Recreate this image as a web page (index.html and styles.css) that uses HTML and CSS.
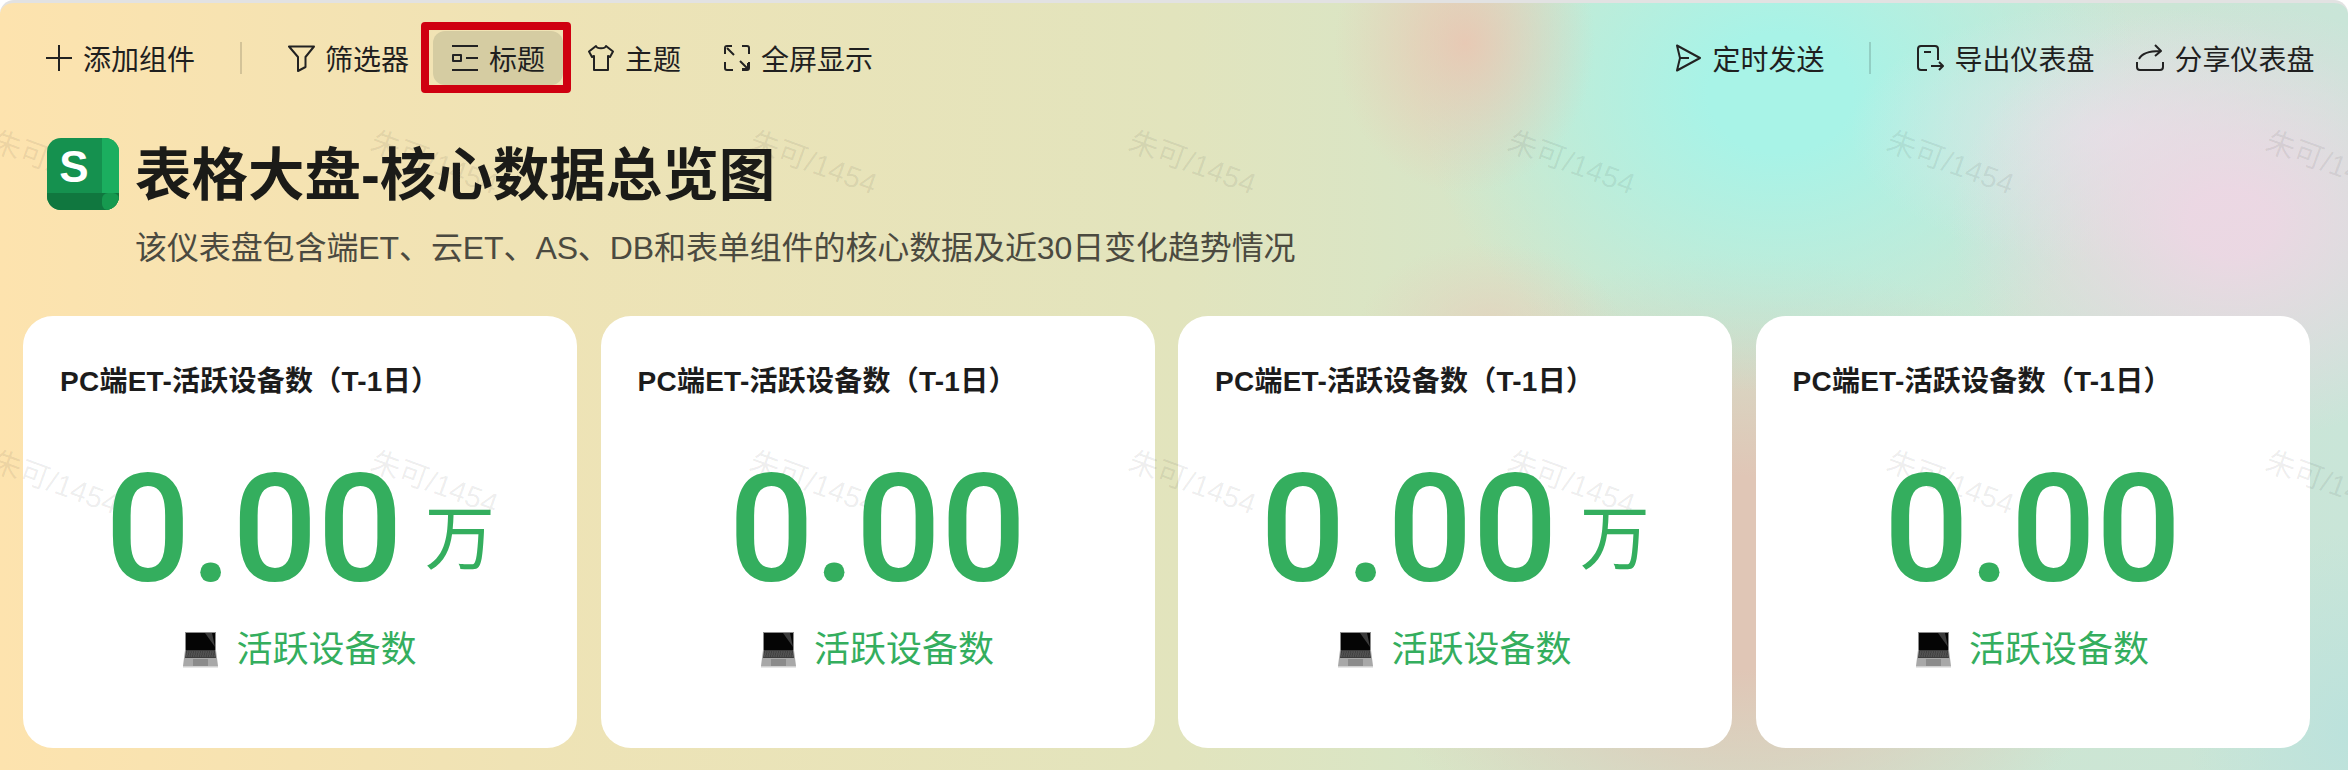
FILE: index.html
```html
<!DOCTYPE html>
<html lang="zh-CN">
<head>
  <meta charset="UTF-8">
  <title>表格大盘-核心数据总览图</title>
  <link rel="stylesheet" href="styles.css">
</head>
<body>
  <div class="dashboard">
    <div class="watermarks">
      <span>朱可/1454</span><span>朱可/1454</span><span>朱可/1454</span><span>朱可/1454</span><span>朱可/1454</span><span>朱可/1454</span><span>朱可/1454</span>
      <span>朱可/1454</span><span>朱可/1454</span><span>朱可/1454</span><span>朱可/1454</span><span>朱可/1454</span><span>朱可/1454</span><span>朱可/1454</span>
      <span>朱可/1454</span><span>朱可/1454</span><span>朱可/1454</span><span>朱可/1454</span><span>朱可/1454</span><span>朱可/1454</span><span>朱可/1454</span>
    </div>

    <div class="toolbar">
      <div class="tool-group">
        <div class="tool">
          <svg class="icon" viewBox="0 0 28 28"><path d="M14 1v26M1 14h26"/></svg>
          添加组件
        </div>
        <div class="divider"></div>
        <div class="tool">
          <svg class="icon" viewBox="0 0 28 28"><path d="M2 2.500h25l-8.500 10.500v10l-7.500 4V13z"/></svg>
          筛选器
        </div>
        <div class="tool tool-active">
          <svg class="icon" viewBox="0 0 28 28"><path d="M1 2h26M1 26h26M15 14h12M2 11h8v6H2z"/></svg>
          标题
        </div>
        <div class="tool">
          <svg class="icon" viewBox="0 0 28 28"><path d="M9 2c1 3 9 3 10 0l7 5.500-3 5.500-2-1v14H7V12l-2 1-3-5.500z"/></svg>
          主题
        </div>
        <div class="tool">
          <svg class="icon" viewBox="0 0 28 28"><path d="M2 10V4a2 2 0 0 1 2-2h5M4 4l7 7M19 2h5a2 2 0 0 1 2 2v6M2 18v6a2 2 0 0 0 2 2h6M26 18v6a2 2 0 0 1-2 2h-5M17 17l8 8M25 19v6h-6"/></svg>
          全屏显示
        </div>
      </div>
      <div class="tool-group">
        <div class="tool">
          <svg class="icon" viewBox="0 0 28 28"><path d="M3 1.500 26 14 3 26.500l3-12.500zM6 14h9"/></svg>
          定时发送
        </div>
        <div class="divider"></div>
        <div class="tool">
          <svg class="icon" viewBox="0 0 28 28"><path d="M22 16V5a3 3 0 0 0-3-3H5a3 3 0 0 0-3 3v18a3 3 0 0 0 3 3h6M8 8h7M15 22h12M23 18l4 4-4 4"/></svg>
          导出仪表盘
        </div>
        <div class="tool">
          <svg class="icon" viewBox="0 0 28 28"><path d="M1 18v5a3 3 0 0 0 3 3h20a3 3 0 0 0 3-3v-5M3 15c3-6 10-8 21-8M19 1l6 6-6 5"/></svg>
          分享仪表盘
        </div>
      </div>
    </div>

    <div class="heading">
      <svg class="logo" viewBox="0 0 72 72">
        <defs><clipPath id="logoClip"><rect width="72" height="72" rx="14"/></clipPath></defs>
        <g clip-path="url(#logoClip)">
          <rect width="72" height="72" fill="#15914f"/>
          <rect x="55" width="17" height="72" fill="#1bae5f"/>
          <rect y="55" width="72" height="17" fill="#10773f"/>
          <rect x="55" y="55" width="17" height="17" rx="6" fill="#16994f"/>
        </g>
        <text class="logo-letter" x="27" y="43.500" text-anchor="middle">S</text>
      </svg>
      <h1>表格大盘-核心数据总览图</h1>
    </div>
    <p class="subtitle">该仪表盘包含端ET、云ET、AS、DB和表单组件的核心数据及近30日变化趋势情况</p>

    <div class="cards">
      <div class="card">
        <div class="card-title">PC端ET-活跃设备数（T-1日）</div>
        <div class="metric"><span class="metric-value">0.00</span><span class="metric-unit">万</span></div>
        <div class="metric-label">
          <svg class="laptop" viewBox="0 0 35 36"><use href="#laptopIcon"/></svg>
          活跃设备数
        </div>
      </div>
      <div class="card">
        <div class="card-title">PC端ET-活跃设备数（T-1日）</div>
        <div class="metric"><span class="metric-value">0.00</span></div>
        <div class="metric-label">
          <svg class="laptop" viewBox="0 0 35 36"><use href="#laptopIcon"/></svg>
          活跃设备数
        </div>
      </div>
      <div class="card">
        <div class="card-title">PC端ET-活跃设备数（T-1日）</div>
        <div class="metric"><span class="metric-value">0.00</span><span class="metric-unit">万</span></div>
        <div class="metric-label">
          <svg class="laptop" viewBox="0 0 35 36"><use href="#laptopIcon"/></svg>
          活跃设备数
        </div>
      </div>
      <div class="card">
        <div class="card-title">PC端ET-活跃设备数（T-1日）</div>
        <div class="metric"><span class="metric-value">0.00</span></div>
        <div class="metric-label">
          <svg class="laptop" viewBox="0 0 35 36"><use href="#laptopIcon"/></svg>
          活跃设备数
        </div>
      </div>
    </div>

    <svg class="sprite" width="0" height="0">
      <defs>
        <g id="laptopIcon">
          <rect x="2" y="0" width="31" height="18" fill="#8d8d8d"/>
          <path d="M3 1h29v17H3z" fill="#050505"/>
          <path d="M22 1h7l3 14z" fill="#3c3c3c"/>
          <path d="M2 18h31l2 16H0z" fill="#a8a8a8"/>
          <path d="M3 18h29l1 8H2z" fill="#3d3d3d"/>
          <path d="M4 20h27M3.500 22h28M3 24h29" stroke="#777" stroke-width=".8" stroke-dasharray="1.500 .8"/>
          <path d="M10 27h15v7H10z" fill="#8b8b8b"/>
          <path d="M0 34h35v1.500H0z" fill="#d0d0d0"/>
        </g>
      </defs>
    </svg>
  </div>
</body>
</html>
```

FILE: styles.css
```css
body {
  margin: 0;
  background: #fff;
  font-family: "Liberation Sans", "Noto Sans CJK SC", sans-serif;
  color: #1f1f1f;
}
.sprite {
  position: absolute;
}
.dashboard {
  position: relative;
  height: 767px;
  overflow: hidden;
  border-top: 3px solid #e2e2e2;
  border-radius: 14px 14px 0 0;
  background:
    radial-gradient(ellipse 130px 150px at 1465px 40px, rgba(234, 198, 178, 0.9), rgba(234, 198, 178, 0) 100%),
    radial-gradient(ellipse 130px 80px at 1490px 320px, rgba(232, 204, 186, 0.6), rgba(232, 204, 186, 0) 100%),
    radial-gradient(ellipse 280px 220px at 2230px 220px, rgba(238, 214, 228, 0.9) 15%, rgba(238, 214, 228, 0) 100%),
    radial-gradient(ellipse 260px 130px at 2110px 130px, rgba(226, 228, 232, 0.9), rgba(226, 228, 232, 0) 100%),
    radial-gradient(ellipse 360px 300px at 1780px 90px, rgba(168, 243, 231, 1) 20%, rgba(168, 243, 231, 0) 100%),
    radial-gradient(ellipse 400px 320px at 1740px 570px, rgba(224, 198, 182, 1) 30%, rgba(224, 198, 182, 0) 100%),
    radial-gradient(ellipse 160px 200px at 2348px 730px, rgba(188, 226, 220, 1), rgba(188, 226, 220, 0) 100%),
    linear-gradient(90deg, #fde3ae 0%, #efe3b5 22%, #e2e4bd 50%, #d2e6cc 68%, #c9e5d8 100%);
}
.watermarks {
  position: absolute;
  top: -3px;
  left: -133px;
  z-index: 1;
  display: grid;
  grid-template-columns: repeat(7, 379px);
  grid-auto-rows: 320px;
  place-items: center;
  font-size: 29.500px;
  color: rgba(0, 0, 0, 0.07);
  white-space: nowrap;
  pointer-events: none;
}
.watermarks span {
  transform: rotate(20deg);
}
.toolbar,
.heading,
.subtitle,
.card-title,
.metric,
.metric-label {
  position: relative;
  z-index: 2;
}
.toolbar {
  display: flex;
  justify-content: space-between;
  padding: 28px 15.500px 0 27px;
}
.tool-group {
  display: flex;
  align-items: center;
  gap: 6px;
}
.tool {
  position: relative;
  display: flex;
  align-items: center;
  gap: 10px;
  height: 54px;
  padding: 0 18px;
  border-radius: 12px;
  font-size: 28px;
  white-space: nowrap;
}
.tool-active {
  background: #d5cca2;
}
.tool-active::after {
  content: "";
  position: absolute;
  inset: -9px -8px -8px -12px;
  border: 8px solid #cf0010;
  border-radius: 4px;
}
.icon {
  width: 28px;
  height: 28px;
  fill: none;
  stroke: #222;
  stroke-width: 2;
  stroke-linejoin: round;
}
.divider {
  width: 2px;
  height: 32px;
  margin: 0 21px;
  background: rgba(0, 0, 0, 0.14);
}
.heading {
  display: flex;
  align-items: center;
  gap: 16px;
  margin-top: 53px;
  padding-left: 47px;
}
.logo {
  width: 72px;
  height: 72px;
  flex: none;
}
.logo-letter {
  font-family: "Liberation Sans", sans-serif;
  font-size: 44px;
  font-weight: bold;
  fill: #fff;
}
h1 {
  margin: 0;
  padding-top: 4px;
  font-size: 56.500px;
  font-weight: bold;
  line-height: 68px;
  color: #1b1b18;
}
.subtitle {
  margin: 16px 0 0;
  padding-left: 135px;
  font-size: 32px;
  letter-spacing: -0.1px;
  line-height: 44px;
  color: #4b4a40;
}
.cards {
  display: grid;
  grid-template-columns: repeat(4, 554px);
  gap: 23.500px;
  margin-top: 46px;
  padding-left: 23px;
}
.card {
  height: 432px;
  padding-top: 46px;
  box-sizing: border-box;
  border-radius: 30px;
  background: #fff;
}
.card-title {
  padding-left: 37px;
  font-size: 28px;
  font-weight: bold;
  letter-spacing: 0.25px;
  line-height: 40px;
  color: #1c1c1c;
}
.metric {
  display: flex;
  justify-content: center;
  align-items: baseline;
  gap: 22px;
  height: 144px;
  margin-top: 56px;
  line-height: 144px;
  color: #34ae5e;
}
.metric-value {
  font-family: Roboto, "Liberation Sans", sans-serif;
  font-size: 150px;
  font-weight: 500;
}
.metric-unit {
  align-self: flex-end;
  padding-bottom: 27px;
  font-size: 70px;
  line-height: 70px;
}
.metric-label {
  display: flex;
  justify-content: center;
  align-items: center;
  gap: 18px;
  margin-top: 24px;
  font-size: 36px;
  line-height: 48px;
  color: #34ae5e;
}
.laptop {
  width: 35px;
  height: 36px;
}
```
